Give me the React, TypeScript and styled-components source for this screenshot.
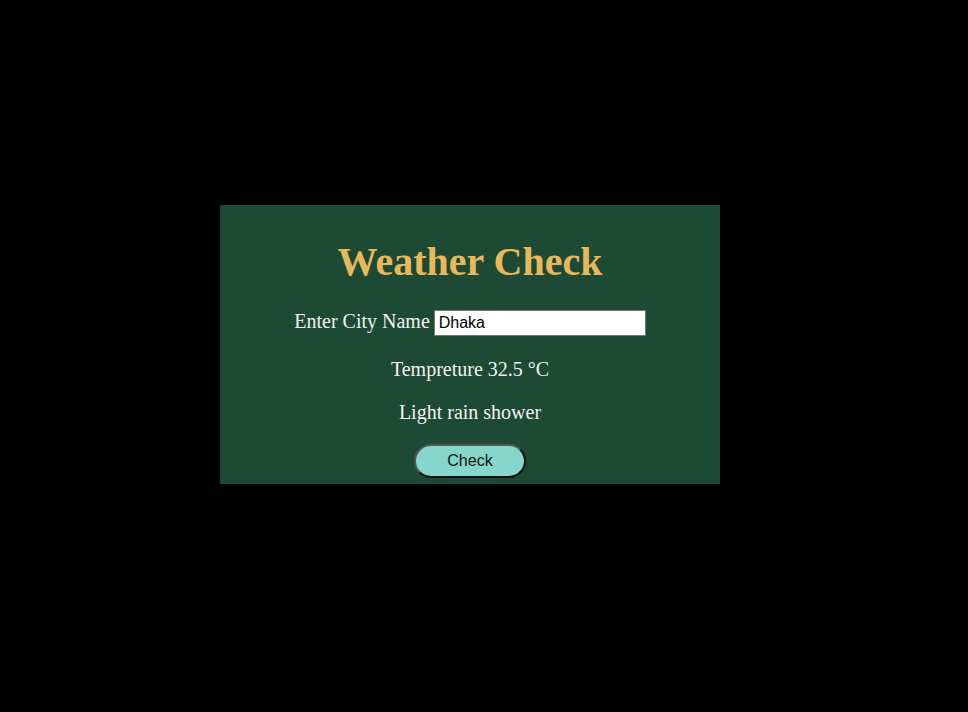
import React from "react";
import styled, { createGlobalStyle } from "styled-components";

const Global = createGlobalStyle`
  html, body { margin: 0; padding: 0; background: #000; }
  body { font-family: "Liberation Serif", "Times New Roman", serif; }
`;

const Page = styled.div`
  width: 968px;
  height: 712px;
  background: #000;
  padding: 205px 0 0 220px;
  box-sizing: border-box;
`;

const Card = styled.div`
  width: 500px;
  height: 279px;
  background: #1d4a34;
  box-sizing: border-box;
  padding-top: 36px;
  display: flex;
  flex-direction: column;
  align-items: center;
`;

const Title = styled.h1`
  margin: 0;
  font-family: "Liberation Serif", "Times New Roman", serif;
  font-weight: bold;
  font-size: 40px;
  line-height: 42px;
  color: #e8b95a;
`;

const Row = styled.div`
  margin-top: 27px;
  display: flex;
  align-items: baseline;
  gap: 4px;
  color: #f2f2f2;
  font-size: 20px;
`;

const Input = styled.input`
  width: 212px;
  height: 26px;
  box-sizing: border-box;
  border: 1px solid #767676;
  padding: 1px 4px;
  font-family: "Liberation Sans", Arial, sans-serif;
  font-size: 16px;
  color: #000;
  background: #fff;
  outline: none;
`;

const Info = styled.p<{ $gap: number }>`
  margin: ${(p) => p.$gap}px 0 0;
  color: #f2f2f2;
  font-size: 20px;
  line-height: 23px;
`;

const Button = styled.button`
  margin-top: 20px;
  width: 112px;
  height: 34px;
  box-sizing: border-box;
  border-radius: 17px;
  border: 2px solid;
  border-color: #555 #111 #111 #555;
  background: #85d7cb;
  font-family: "Liberation Sans", Arial, sans-serif;
  font-size: 16px;
  color: #111;
  cursor: pointer;
`;

export default function App() {
  return (
    <>
      <Global />
      <Page>
        <Card>
          <Title>Weather Check</Title>
          <Row>
            <label htmlFor="city">Enter City Name</label>
            <Input id="city" defaultValue="Dhaka" />
          </Row>
          <Info $gap={22}>Tempreture 32.5 °C</Info>
          <Info $gap={20}>Light rain shower</Info>
          <Button>Check</Button>
        </Card>
      </Page>
    </>
  );
}
